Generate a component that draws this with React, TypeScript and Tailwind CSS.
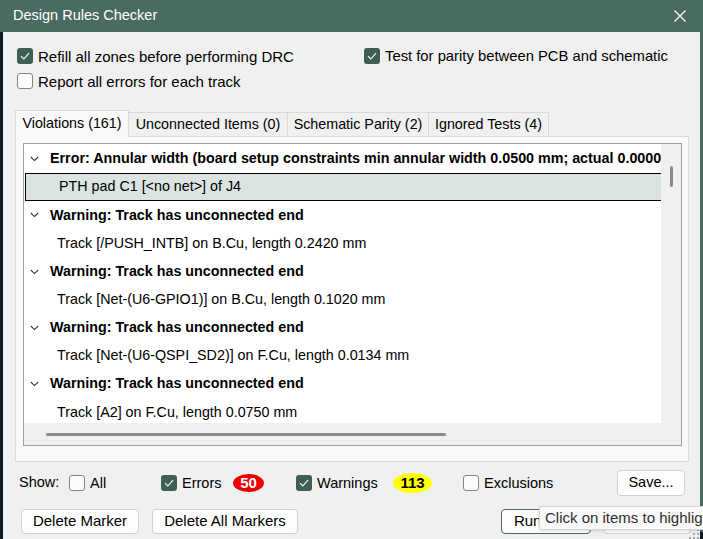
import { FC, ReactNode } from 'react'
import clsx from 'clsx'

const Box: FC<{ checked?: boolean }> = ({ checked }) =>
  checked ? (
    <span className="w-4 h-4 shrink-0 rounded-[3px] bg-[#3f5f55] flex items-center justify-center">
      <svg width="10" height="8" viewBox="0 0 10 8">
        <path d="M1 4.2l2.8 2.8L9 1.2" stroke="white" fill="none" strokeWidth="1.1" />
      </svg>
    </span>
  ) : (
    <span className="w-4 h-4 shrink-0 rounded-[3px] border border-[#858585] bg-[#fbfbfb]" />
  )

const Check: FC<{ checked?: boolean; label: string; className?: string }> = ({
  checked,
  label,
  className,
}) => (
  <div className={clsx('flex items-center gap-[5px] h-4', className)}>
    <Box checked={checked} />
    <span className="whitespace-nowrap leading-none">{label}</span>
  </div>
)

const Button: FC<{ children: ReactNode; className?: string }> = ({ children, className }) => (
  <div
    className={clsx(
      'h-[25px] flex items-center justify-center rounded-[4px] border bg-[#fdfdfd] whitespace-nowrap',
      className,
    )}
  >
    {children}
  </div>
)

const Chevron = () => (
  <svg width="9" height="6" viewBox="0 0 9 6" className="shrink-0">
    <path d="M0.8 1l3.7 3.6L8.2 1" stroke="#333" fill="none" strokeWidth="1.1" />
  </svg>
)

type Row = { kind: 'head' | 'item'; text: string; selected?: boolean }

const rows: Row[] = [
  {
    kind: 'head',
    text: 'Error: Annular width (board setup constraints min annular width 0.0500 mm; actual 0.0000 mm)',
  },
  { kind: 'item', text: 'PTH pad C1 [<no net>] of J4', selected: true },
  { kind: 'head', text: 'Warning: Track has unconnected end' },
  { kind: 'item', text: 'Track [/PUSH_INTB] on B.Cu, length 0.2420 mm' },
  { kind: 'head', text: 'Warning: Track has unconnected end' },
  { kind: 'item', text: 'Track [Net-(U6-GPIO1)] on B.Cu, length 0.1020 mm' },
  { kind: 'head', text: 'Warning: Track has unconnected end' },
  { kind: 'item', text: 'Track [Net-(U6-QSPI_SD2)] on F.Cu, length 0.0134 mm' },
  { kind: 'head', text: 'Warning: Track has unconnected end' },
  { kind: 'item', text: 'Track [A2] on F.Cu, length 0.0750 mm' },
]

const tabs = [
  { label: 'Violations (161)', w: 'w-[114px]', active: true },
  { label: 'Unconnected Items (0)', w: 'w-[160px]' },
  { label: 'Schematic Parity (2)', w: 'w-[142px]' },
  { label: 'Ignored Tests (4)', w: 'w-[121px]' },
]

export default function App() {
  return (
    <div className="w-[703px] h-[539px] overflow-hidden relative bg-[#0f1a22] font-['Liberation_Sans',Arial,sans-serif] text-[15px] text-black">
      {/* title bar */}
      <div className="h-[32px] bg-[#4a6b61] flex items-center justify-between pl-[13px] pr-[17px] text-white">
        <span className="text-[14.5px]">Design Rules Checker</span>
        <svg width="12" height="12" viewBox="0 0 12 12">
          <path d="M0.5 0.5l11 11M11.5 0.5l-11 11" stroke="white" strokeWidth="1.1" />
        </svg>
      </div>

      <div className="ml-[3px] mr-[3px] h-[507px] bg-[#f0f0f0] flex flex-col">
        {/* options */}
        <div className="pt-[16px] pl-[14px] flex flex-col gap-[9px]">
          <div className="flex">
            <Check checked label="Refill all zones before performing DRC" className="w-[347px]" />
            <Check checked label="Test for parity between PCB and schematic" className="text-[14.8px]" />
          </div>
          <Check label="Report all errors for each track" />
        </div>

        {/* tabs */}
        <div className="mt-[21px] ml-[12px] h-[26px] flex items-end text-[14.3px]">
          {tabs.map((t) => (
            <div
              key={t.label}
              className={clsx(
                'border border-b-0 border-[#d9d9d9] flex items-center justify-center whitespace-nowrap -mr-px',
                t.w,
                t.active ? 'h-[27px] bg-[#f9f9f9] relative z-10 -mb-px' : 'h-[24px] bg-[#f0f0f0]',
              )}
            >
              {t.label}
            </div>
          ))}
        </div>

        {/* panel */}
        <div className="ml-[12px] w-[674px] h-[326px] border border-[#d9d9d9] bg-[#f9f9f9] pt-[6px] pl-[7px] pr-[6px]">
          <div className="h-[303px] border border-[#a0a0a0] bg-white flex flex-col">
            <div className="flex h-[279px]">
              <div className="flex-1 overflow-hidden pt-[1px] text-[14.3px]">
                {rows.map((r, i) => (
                  <div
                    key={i}
                    className={clsx(
                      'h-[28.15px] flex items-center whitespace-nowrap',
                      r.kind === 'head' ? 'pl-[6px] gap-[11px] font-bold' : 'pl-[33px]',
                      r.selected && 'ml-px border border-r-0 border-black bg-[#dce4e1] pl-[31px]',
                    )}
                  >
                    {r.kind === 'head' && <Chevron />}
                    <span>{r.text}</span>
                  </div>
                ))}
              </div>
              <div className="w-[20px] bg-[#f0f0f0] pt-[22px] flex justify-center">
                <div className="w-[3px] h-[21px] rounded-full bg-[#8a8a8a]" />
              </div>
            </div>
            <div className="flex-1 bg-[#f0f0f0] pl-[22px] pt-[10px]">
              <div className="w-[400px] h-[3px] rounded-full bg-[#8a8a8a]" />
            </div>
          </div>
        </div>

        {/* show row */}
        <div className="mt-[8px] h-[26px] flex items-center pl-[16px] pr-[15px] text-[14.5px]">
          <span className="w-[50px]">Show:</span>
          <Check label="All" className="w-[92px] gap-[4px]" />
          <Check checked label="Errors" className="w-[72px]" />
          <span className="w-[31px] h-[18px] rounded-[50%] bg-[#ee0000] text-white font-bold flex items-center justify-center text-[15px]">
            50
          </span>
          <Check checked label="Warnings" className="ml-[32px] w-[97px]" />
          <span className="w-[39px] h-[20px] rounded-[50%] bg-[#ffff00] font-bold flex items-center justify-center text-[15px]">
            113
          </span>
          <Check label="Exclusions" className="ml-[31px]" />
          <Button className="ml-auto w-[68px] h-[26px] border-[#d0d0d0]">Save...</Button>
        </div>

        {/* buttons */}
        <div className="mt-[13px] flex pl-[18px]">
          <Button className="w-[118px] border-[#d0d0d0]">Delete Marker</Button>
          <Button className="ml-[13px] w-[146px] border-[#d0d0d0]">Delete All Markers</Button>
          <Button className="ml-[203px] w-[90px] border-[#4a6b61]">Run DRC</Button>
          <Button className="ml-[12px] w-[88px] border-[#d0d0d0]">
            <span className="invisible">Close</span>
          </Button>
        </div>
      </div>

      {/* right edge of window behind */}
      <div className="absolute right-0 top-[32px] w-[3px] h-[500px] bg-[#4a6b61]" />

      {/* resize grip */}
      <div className="absolute left-[689px] top-[529px] grid grid-cols-3 gap-[2px]">
        {[0, 1, 2, 3, 4, 5, 6, 7, 8].map((d) => (
          <span
            key={d}
            className={clsx('w-[2px] h-[2px]', d === 0 || d === 1 || d === 3 ? 'bg-transparent' : 'bg-[#a8a8a8]')}
          />
        ))}
      </div>

      {/* tooltip */}
      <div className="absolute left-[539px] top-[506px] w-[200px] h-[24px] bg-[#f9f9f9] border border-[#d6d6d6] rounded-[3px] shadow-[0_1px_3px_rgba(0,0,0,0.15)] pl-[5px] flex items-center whitespace-nowrap text-[#2f2f2f]">
        Click on items to highlight them on the board.
      </div>
    </div>
  )
}
